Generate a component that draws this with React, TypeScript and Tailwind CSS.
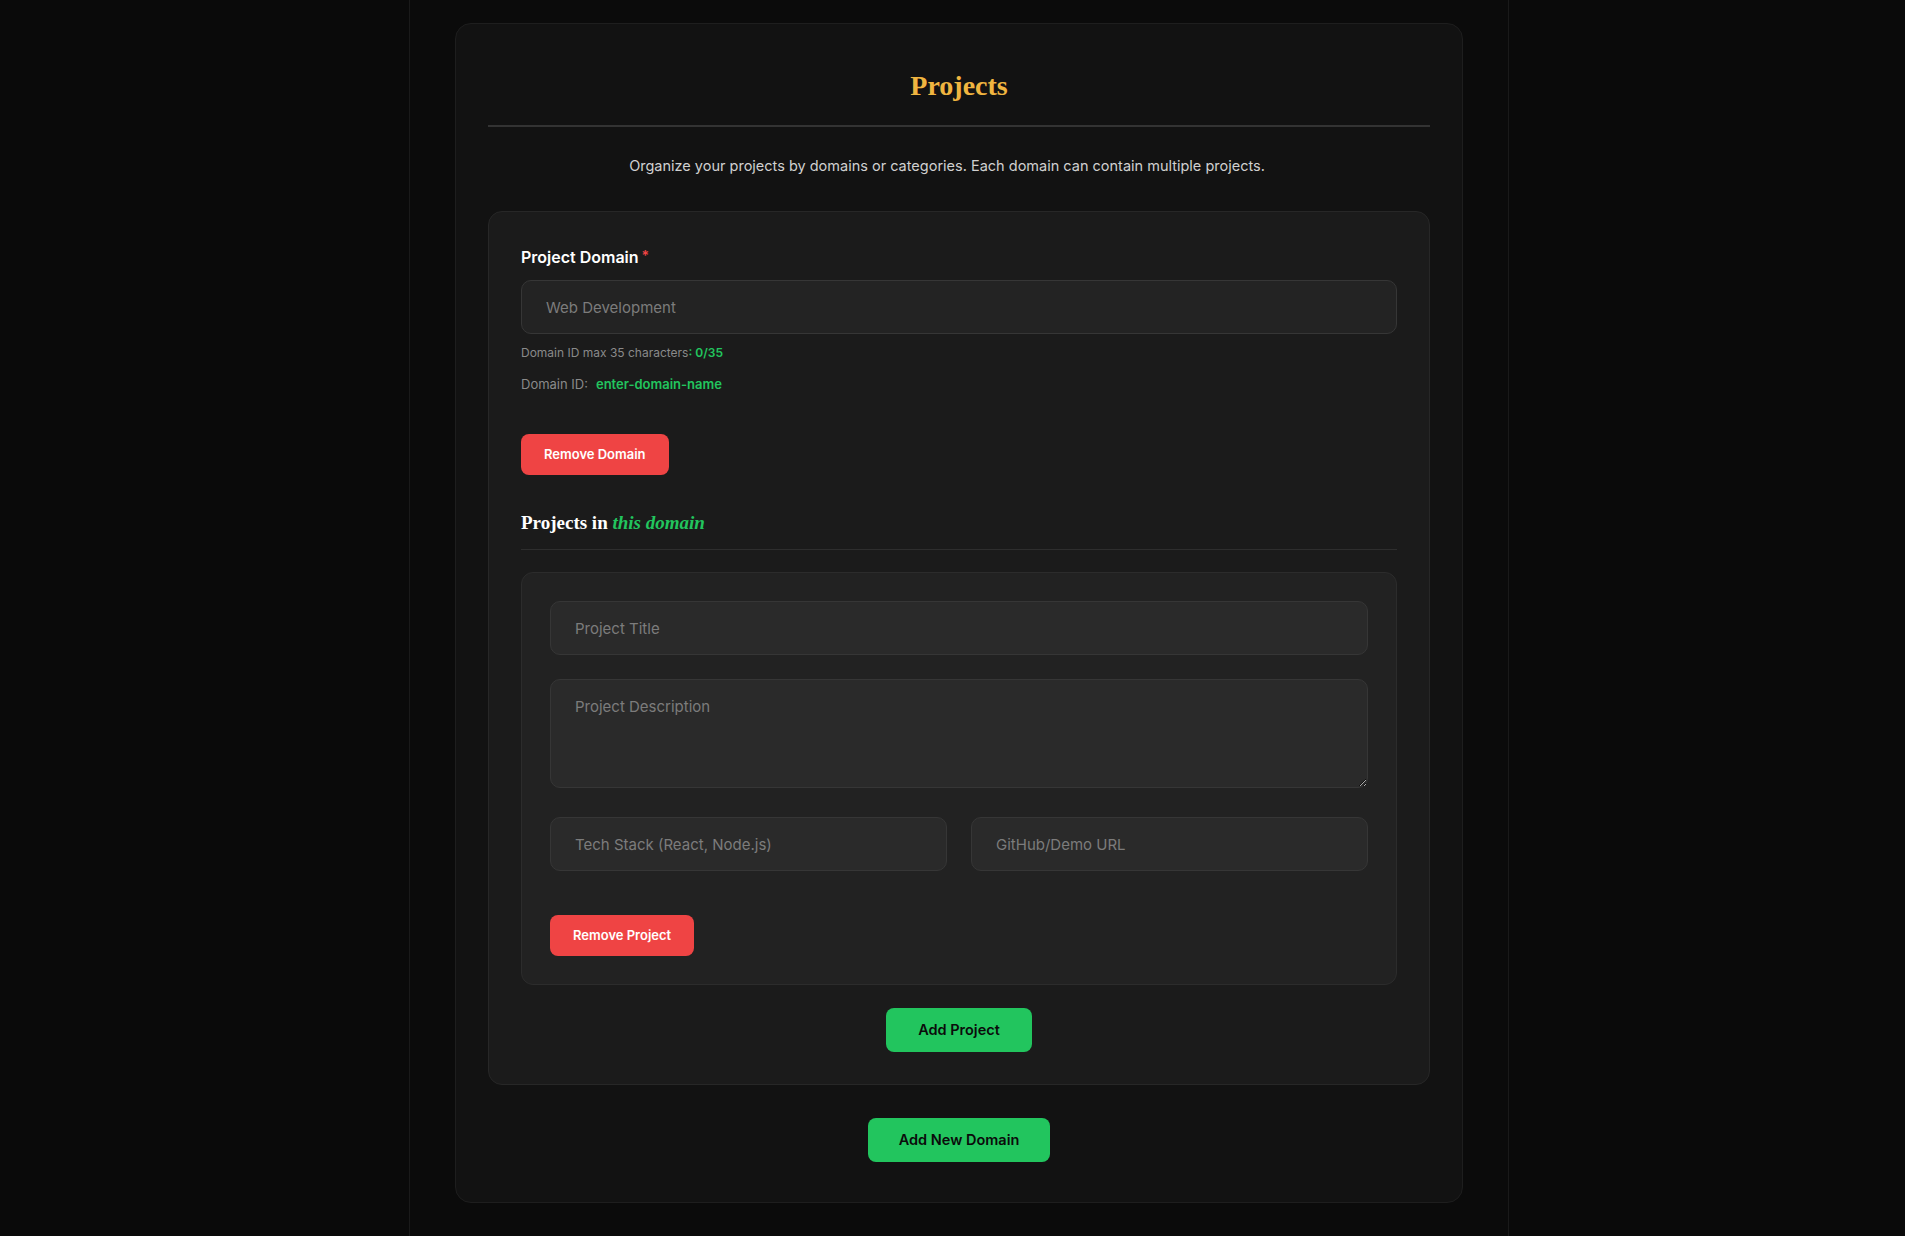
import { useState } from "react";

const sans = "font-['Inter','Liberation_Sans',sans-serif]";
const serif = "font-['Liberation_Serif','DejaVu_Serif',serif]";

const inputCls =
  "w-full h-[54px] rounded-[10px] border border-[#363636] bg-[#2a2a2a] px-6 text-[15px] text-[#e5e5e5] placeholder:text-[#7c7c7c] outline-none";

export default function App() {
  const [domain, setDomain] = useState("");
  const slug = domain.trim()
    ? domain.trim().toLowerCase().replace(/[^a-z0-9]+/g, "-").slice(0, 35)
    : "enter-domain-name";

  return (
    <div className={`min-h-screen bg-[#0a0a0a] pl-[13px] flex justify-center ${sans}`}>
      <div className="w-[1100px] min-h-[1236px] border-x border-[#1a1a1a] bg-[#0b0b0b] pt-[23px]">
        <div className="mx-auto w-[1008px] rounded-2xl border border-[#1e1e1e] bg-[#121212] px-8 pt-8 pb-[40px]">
          {/* header */}
          <h1 className={`${serif} pt-[13px] pb-[22px] text-center text-[28px] leading-[34px] font-bold text-[#f0b540] border-b-2 border-[#333333]`}>
            Projects
          </h1>
          <p className="mt-[28px] pr-[24px] text-center text-[14.5px] leading-[21px] text-[#d0d0d0]">
            Organize your projects by domains or categories. Each domain can contain multiple projects.
          </p>

          {/* domain block */}
          <div className="mt-[35px] rounded-[14px] border border-[#272727] bg-[#1b1b1b] px-8 pt-[35px] pb-8">
            <label className="flex items-start gap-[3px] text-base leading-[20px] font-semibold text-white">
              Project Domain<span className="text-[#ef4444] text-sm leading-[18px]">*</span>
            </label>
            <input
              className={`${inputCls} mt-[13px] bg-[#232323] border-[#3a3a3a]`}
              placeholder="Web Development"
              value={domain}
              maxLength={35}
              onChange={(e) => setDomain(e.target.value)}
            />
            <p className="mt-[11px] text-xs leading-[16px] text-[#8a8a8a]">
              Domain ID max 35 characters<span className="font-semibold text-[#22c55e]">: {domain.length}/35</span>
            </p>
            <p className="mt-[14px] flex gap-2 text-[13px] leading-[18px] text-[#8a8a8a]">
              Domain ID: <span className="font-semibold text-[#22c55e]">{slug}</span>
            </p>
            <button className="mt-[41px] h-[41px] rounded-lg bg-[#ef4444] px-[23px] text-[13px] font-semibold text-white">
              Remove Domain
            </button>

            <h3 className={`${serif} mt-[36px] pb-[14px] text-[19px] leading-[24px] font-bold text-white border-b border-[#2e2e2e]`}>
              Projects in <span className="italic text-[#22c55e]">this domain</span>
            </h3>

            {/* project card */}
            <div className="mt-[22px] rounded-xl border border-[#2c2c2c] bg-[#222222] p-7">
              <input className={inputCls} placeholder="Project Title" />
              <textarea
                className={`${inputCls} mt-6 block h-[109px] py-4 leading-[22px]`}
                placeholder="Project Description"
              />
              <div className="mt-[29px] grid grid-cols-2 gap-6">
                <input className={inputCls} placeholder="Tech Stack (React, Node.js)" />
                <input className={inputCls} placeholder="GitHub/Demo URL" />
              </div>
              <button className="mt-[44px] h-[41px] rounded-lg bg-[#ef4444] px-[23px] text-[13px] font-semibold text-white">
                Remove Project
              </button>
            </div>

            <div className="mt-[23px] flex justify-center">
              <button className="h-[44px] rounded-lg bg-[#22c55e] px-[32px] text-[14.5px] font-semibold text-[#0b0b0b]">
                Add Project
              </button>
            </div>
          </div>

          <div className="mt-[33px] flex justify-center">
            <button className="h-[44px] rounded-lg bg-[#22c55e] px-[31px] text-[14.5px] font-semibold text-[#0b0b0b]">
              Add New Domain
            </button>
          </div>
        </div>
      </div>
    </div>
  );
}
